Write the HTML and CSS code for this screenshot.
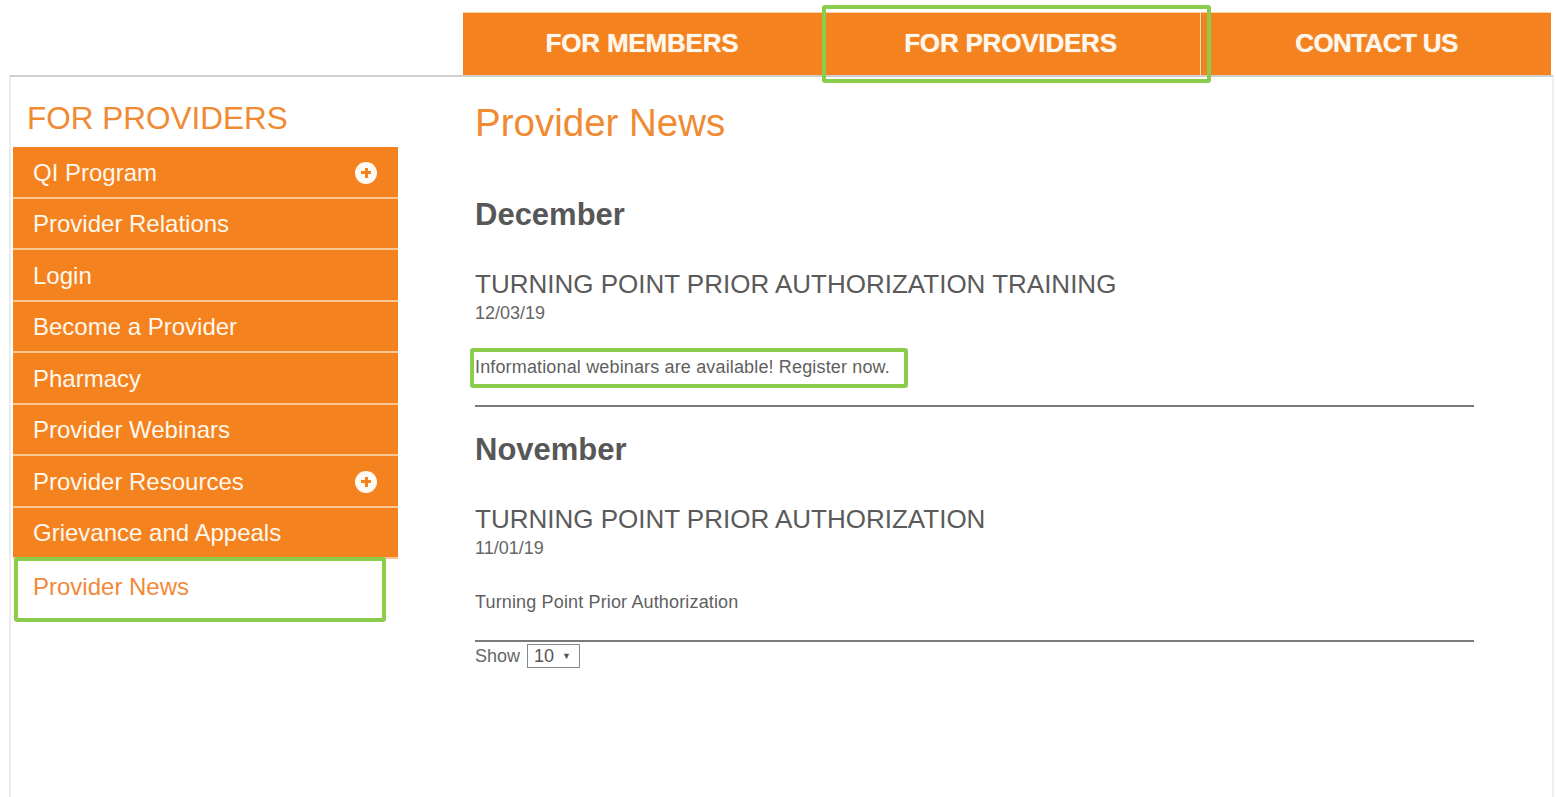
FILE: index.html
```html
<!DOCTYPE html>
<html lang="en">
<head>
<meta charset="utf-8">
<title>Provider News</title>
<link rel="stylesheet" href="styles.css">
</head>
<body>
  <header class="topbar">
    <nav class="mainnav">
      <a class="tab tab-members" href="#">FOR MEMBERS</a>
      <a class="tab tab-providers marked" href="#">FOR PROVIDERS</a>
      <span class="tab-sep"></span>
      <a class="tab tab-contact" href="#">CONTACT US</a>
    </nav>
  </header>

  <div class="page">
    <aside class="sidebar">
      <h2 class="side-title">FOR PROVIDERS</h2>
      <ul class="side-menu">
        <li class="side-item has-sub"><span>QI Program</span><span class="expand"></span></li>
        <li class="side-item"><span>Provider Relations</span></li>
        <li class="side-item"><span>Login</span></li>
        <li class="side-item"><span>Become a Provider</span></li>
        <li class="side-item"><span>Pharmacy</span></li>
        <li class="side-item"><span>Provider Webinars</span></li>
        <li class="side-item has-sub"><span>Provider Resources</span><span class="expand"></span></li>
        <li class="side-item"><span>Grievance and Appeals</span></li>
        <li class="side-item current marked"><span>Provider News</span></li>
      </ul>
    </aside>

    <main class="content">
      <h1 class="page-title">Provider News</h1>

      <section class="month">
        <h3 class="month-name first">December</h3>
        <article class="news">
          <h4 class="news-title">TURNING POINT PRIOR AUTHORIZATION TRAINING</h4>
          <div class="news-date">12/03/19</div>
          <p class="news-body"><span class="marked">Informational webinars are available! Register now.</span></p>
        </article>
      </section>

      <section class="month">
        <h3 class="month-name">November</h3>
        <article class="news">
          <h4 class="news-title">TURNING POINT PRIOR AUTHORIZATION</h4>
          <div class="news-date">11/01/19</div>
          <p class="news-body"><span>Turning Point Prior Authorization</span></p>
        </article>
      </section>

      <div class="pager">
        <span class="pager-label">Show</span>
        <span class="pager-select">10 <span class="caret">&#9660;</span></span>
      </div>
    </main>
  </div>
</body>
</html>
```

FILE: styles.css
```css
* {
  box-sizing: border-box;
}

html, body {
  margin: 0;
  padding: 0;
  background: #ffffff;
}

body {
  width: 1556px;
  height: 797px;
  overflow: hidden;
  font-family: "Liberation Sans", Arial, sans-serif;
  color: #555555;
}

/* ---------- top navigation ---------- */
.topbar {
  padding: 12px 0 0 463px;
}

.mainnav {
  display: flex;
  width: 1088px;
  height: 63px;
  background: #f4821f;
  border-top: 1px solid #fbd3a6;
}

.tab {
  display: flex;
  align-items: center;
  justify-content: center;
  height: 100%;
  padding-bottom: 2px;
  color: #fff7ec;
  text-decoration: none;
  font-weight: bold;
  font-size: 26px;
  letter-spacing: -0.2px;
  text-shadow: 0 0 1px #ffe7c9;
}

.tab-members {
  width: 358px;
}

.tab-providers {
  width: 379px;
}

.tab-sep {
  width: 2px;
  height: 100%;
  background: #fde2c1;
  border-right: 1px solid #e07a20;
}

.tab-contact {
  flex: 1;
  letter-spacing: -0.6px;
}

/* green callout frames */
.marked {
  position: relative;
}

.marked::after {
  content: "";
  position: absolute;
  border: 4px solid #8ccc4c;
  border-radius: 3px;
  pointer-events: none;
}

.tab-providers.marked::after {
  left: 1px;
  right: -11px;
  top: -8px;
  bottom: -8px;
}

/* ---------- page frame ---------- */
.page {
  display: flex;
  margin: 0 2px 0 9px;
  height: 722px;
  border-top: 2px solid #cfcfcf;
  border-left: 2px solid #ececec;
  border-right: 2px solid #efefef;
}

/* ---------- sidebar ---------- */
.sidebar {
  width: 387px;
  padding-left: 2px;
  flex: none;
}

.side-title {
  margin: 23px 0 11px 14px;
  font-weight: normal;
  font-size: 31.5px;
  line-height: 36px;
  color: #f08a33;
}

.side-menu {
  list-style: none;
  margin: 0;
  padding: 0;
  width: 385px;
}

.side-item {
  display: flex;
  align-items: center;
  justify-content: space-between;
  height: 51.5px;
  padding: 2px 21px 0 20px;
  background: #f4821f;
  border-bottom: 2px solid #fbc894;
  color: #fff8ee;
  font-size: 24px;
  letter-spacing: 0;
}

.expand {
  position: relative;
  width: 22px;
  height: 22px;
  border-radius: 50%;
  background: #fffaf3;
}

.expand::before,
.expand::after {
  content: "";
  position: absolute;
  left: 50%;
  top: 50%;
  background: #f4821f;
}

.expand::before {
  width: 10px;
  height: 3px;
  margin: -1.5px 0 0 -5px;
}

.expand::after {
  width: 3px;
  height: 10px;
  margin: -5px 0 0 -1.5px;
}

.side-item.current {
  background: #ffffff;
  border-bottom: none;
  height: 54px;
  color: #f08a3a;
}

.side-item.current.marked::after {
  left: 1px;
  right: 12px;
  top: -2px;
  bottom: -9px;
}

/* ---------- main content ---------- */
.content {
  flex: none;
  width: 999px;
  margin-left: 77px;
}

.page-title {
  margin: 24px 0 0;
  font-weight: normal;
  font-size: 38.5px;
  line-height: 44px;
  color: #f08a33;
}

.month-name {
  margin: 25px 0 0;
  font-size: 31px;
  line-height: 36px;
  font-weight: bold;
  color: #575757;
}

.month-name.first {
  margin-top: 52px;
}

.news {
  padding-bottom: 27px;
  border-bottom: 2px solid #7a7a7a;
}

.news-title {
  margin: 36px 0 0;
  font-weight: normal;
  font-size: 26px;
  line-height: 30px;
  letter-spacing: 0;
  color: #5a5a5a;
}

.news-date {
  margin-top: 3px;
  font-size: 18px;
  line-height: 22px;
  color: #666666;
}

.news-body {
  margin: 32px 0 0;
  font-size: 18px;
  line-height: 22px;
  letter-spacing: 0.15px;
  color: #5f5f5f;
}

.news-body .marked::after {
  left: -5px;
  right: -18px;
  top: -9px;
  bottom: -11px;
}

/* page size selector */
.pager {
  display: flex;
  align-items: center;
  margin-top: 2px;
  font-size: 18px;
  color: #666666;
}

.pager-label {
  margin-right: 7px;
}

.pager-select {
  display: inline-flex;
  align-items: center;
  height: 24px;
  width: 53px;
  padding: 0 6px;
  border: 1px solid #8a8a8a;
  color: #555555;
}

.caret {
  margin-left: 8px;
  font-size: 9px;
  color: #555555;
}
```
